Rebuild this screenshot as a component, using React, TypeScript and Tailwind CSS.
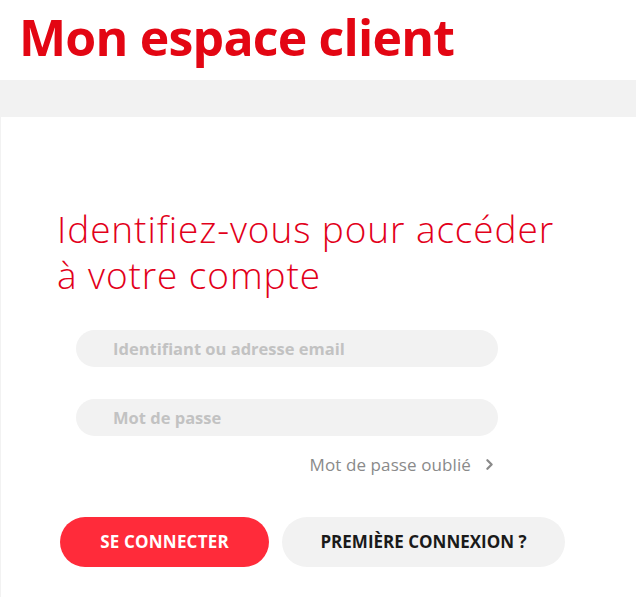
import { ChevronRight } from "lucide-react";

export default function App() {
  return (
    <div className="w-[636px] min-h-[597px] bg-white font-['Open_Sans','Liberation_Sans',sans-serif]">
      <header className="h-20 flex items-start pt-[9px] pl-[19px]">
        <h1 className="text-[50px] font-bold leading-[56px] text-[#e30613] tracking-[-0.8px]">
          Mon espace client
        </h1>
      </header>
      <div className="h-[37px] bg-[#f2f2f2]" />
      <main className="border-l border-[#f2f2f2] pb-8">
        <h2 className="pt-[89px] pl-[56px] text-[37px] font-light leading-[46px] tracking-[0.9px] text-[#e2001a]">
          Identifiez-vous pour accéder
          <br />à votre compte
        </h2>
        <form className="mt-[32px] ml-[75px] w-[422px] flex flex-col gap-8">
          <input
            type="text"
            placeholder="Identifiant ou adresse email"
            className="h-[37px] rounded-full bg-[#f2f2f2] pl-[37px] text-[16.5px] font-bold text-[#555] placeholder:text-[#c2c2c2] outline-none"
          />
          <input
            type="password"
            placeholder="Mot de passe"
            className="h-[37px] rounded-full bg-[#f2f2f2] pl-[37px] text-[16.5px] font-bold text-[#555] placeholder:text-[#c2c2c2] outline-none"
          />
        </form>
        <div className="mt-[16px] ml-[75px] w-[422px] flex justify-end items-center gap-[10px] text-[17px] tracking-[0.1px] text-[#8a8a8a]">
          <span>Mot de passe oublié</span>
          <ChevronRight className="w-[17px] h-[17px] text-[#8a8a8a]" strokeWidth={3.2} />
        </div>
        <div className="mt-[39px] ml-[59px] flex gap-[13px]">
          <button className="w-[209px] h-[50px] rounded-full bg-[#ff2b3a] text-white text-[17px] font-bold tracking-[0.2px]">
            SE CONNECTER
          </button>
          <button className="w-[283px] h-[50px] rounded-full bg-[#f2f2f2] text-[#1a1a1a] text-[17px] font-bold">
            PREMIÈRE CONNEXION ?
          </button>
        </div>
      </main>
    </div>
  );
}
